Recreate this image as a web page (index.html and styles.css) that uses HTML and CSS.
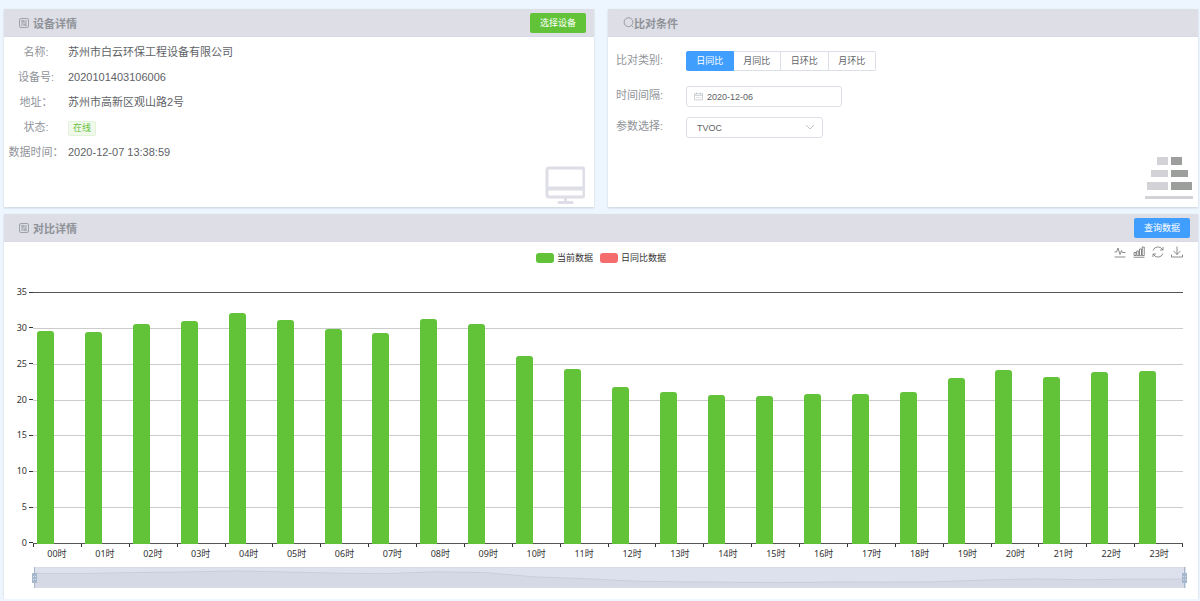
FILE: index.html
```
<!DOCTYPE html>
<html lang="zh-CN">
<head>
    <meta charset="UTF-8">
    <meta name="viewport" content="width=device-width, initial-scale=1.0">
    <title>对比详情</title>
    <link rel="stylesheet" href="styles.css">
</head>
<body>
<div class="top-row">
    <section class="card">
        <div class="card-header">
            <svg class="title-icon" viewBox="0 0 20 20" fill="none" stroke="currentColor" stroke-width="1.6">
                <rect x="1" y="1" width="18" height="18" rx="3"></rect>
                <path d="M4 6h2M9 6h7M4 14h7M14 14h2M4 10h12"></path>
                <circle cx="7.500" cy="6" r="1.500"></circle>
                <circle cx="12.500" cy="14" r="1.500"></circle>
            </svg>
            <h2>设备详情</h2>
            <button type="button" class="btn btn-success">选择设备</button>
        </div>
        <div class="card-body">
            <dl class="device-info">
                <dt>名称:</dt>
                <dd>苏州市白云环保工程设备有限公司</dd>
                <dt>设备号:</dt>
                <dd>2020101403106006</dd>
                <dt>地址：</dt>
                <dd>苏州市高新区观山路2号</dd>
                <dt>状态:</dt>
                <dd><span class="tag">在线</span></dd>
                <dt>数据时间：</dt>
                <dd>2020-12-07 13:38:59</dd>
            </dl>
            <svg class="monitor-icon" viewBox="0 0 40 38" fill="none" stroke="#dddee6" stroke-width="3">
                <rect x="2" y="2" width="37" height="29" rx="2"></rect>
                <path d="M3 22.500h35" stroke-width="4"></path>
                <path d="M20.500 31v5"></path>
                <path d="M14 36.500h13" stroke-linecap="round"></path>
            </svg>
        </div>
    </section>

    <section class="card">
        <div class="card-header">
            <svg class="title-icon search" viewBox="0 0 20 20" fill="none" stroke="currentColor" stroke-width="1.6">
                <circle cx="10" cy="9.5" r="8"></circle>
                <path d="M15.5 15.5l3 3"></path>
            </svg>
            <h2>比对条件</h2>
        </div>
        <div class="card-body">
            <form class="filters">
                <div class="filter-row category">
                    <span class="filter-label" id="categoryLabel">比对类别:</span>
                    <div class="radio-group" role="radiogroup" aria-labelledby="categoryLabel">
                        <label><input type="radio" name="category" checked><span>日同比</span></label>
                        <label><input type="radio" name="category"><span>月同比</span></label>
                        <label><input type="radio" name="category"><span>日环比</span></label>
                        <label><input type="radio" name="category"><span>月环比</span></label>
                    </div>
                </div>
                <div class="filter-row">
                    <label class="filter-label" for="dateInput">时间间隔:</label>
                    <div class="field date-field">
                        <svg class="calendar-icon" viewBox="0 0 16 16" fill="none" stroke="#c0c4cc" stroke-width="1.4">
                            <path d="M1 3h14v11H1zM1 6h14M4.500 1v3M11.500 1v3"></path>
                            <path d="M4 10h8" stroke-dasharray="2 1"></path>
                        </svg>
                        <input type="text" id="dateInput" value="2020-12-06">
                    </div>
                </div>
                <div class="filter-row">
                    <label class="filter-label" for="paramSelect">参数选择:</label>
                    <div class="field select-field">
                        <select id="paramSelect">
                            <option>TVOC</option>
                        </select>
                        <svg class="arrow-icon" viewBox="0 0 10 10" fill="none" stroke="#c0c4cc">
                            <path d="M1 3l4 4 4-4"></path>
                        </svg>
                    </div>
                </div>
            </form>
            <svg class="stack-icon" viewBox="0 0 48 44">
                <g fill="#d3d2d6">
                    <rect x="12" y="1" width="11" height="8"></rect>
                    <rect x="6" y="14" width="17" height="7"></rect>
                    <rect x="2" y="26" width="21" height="8"></rect>
                    <rect x="0" y="40" width="48" height="3"></rect>
                </g>
                <g fill="#9c9f9c">
                    <rect x="26" y="1" width="11" height="8"></rect>
                    <rect x="26" y="14" width="17" height="7"></rect>
                    <rect x="26" y="26" width="21" height="8"></rect>
                </g>
            </svg>
        </div>
    </section>
</div>

<section class="card">
    <div class="card-header">
        <svg class="title-icon" viewBox="0 0 20 20" fill="none" stroke="currentColor" stroke-width="1.6">
            <rect x="1" y="1" width="18" height="18" rx="3"></rect>
            <path d="M4 6h2M9 6h7M4 14h7M14 14h2M4 10h12"></path>
            <circle cx="7.500" cy="6" r="1.500"></circle>
            <circle cx="12.500" cy="14" r="1.500"></circle>
        </svg>
        <h2>对比详情</h2>
        <button type="button" class="btn btn-primary">查询数据</button>
    </div>
    <div class="chart">
        <div class="chart-top">
            <div class="legend">
                <span class="legend-item"><i class="swatch current"></i>当前数据</span>
                <span class="legend-item"><i class="swatch compare"></i>日同比数据</span>
            </div>
            <div class="toolbox">
                <svg viewBox="0 0 24 24"><path d="M1 12h4l3-8 4 13 3-8 2 4h6M1 22h22"></path></svg>
                <svg viewBox="0 0 24 24"><path d="M2 13h4v6H2zM7.500 10h4v9h-4zM13 6h4v13h-4zM18.500 2h4v17h-4zM1 22.500h22"></path></svg>
                <svg viewBox="0 0 24 24"><path d="M2 9a10.500 10.500 0 0 1 19-2M22 2v6h-6M22 15a10.500 10.500 0 0 1-19 2M2 22v-6h6"></path></svg>
                <svg viewBox="0 0 24 24"><path d="M12 1v16M5 10l7 7 7-7M1 17v5h22v-5"></path></svg>
            </div>
        </div>
        <div class="plot">
            <div class="y-axis">
                <span>35</span><span>30</span><span>25</span><span>20</span><span>15</span><span>10</span><span>5</span><span>0</span>
            </div>
            <div class="plot-area">
                <div class="grid-lines"><i></i><i></i><i></i><i></i><i></i><i></i><i></i><i></i></div>
                <div class="bars" id="bars"></div>
            </div>
            <div class="x-axis">
                <div class="x-ticks" id="xTicks"></div>
                <div class="x-labels" id="xLabels"></div>
            </div>
        </div>
        <div class="zoom-slider">
            <svg viewBox="0 0 23 21" preserveAspectRatio="none">
                <polygon id="zoomArea"></polygon>
                <polyline id="zoomLine"></polyline>
            </svg>
            <span class="handle left"></span>
            <span class="handle right"></span>
        </div>
    </div>
</section>

<script src="chart.js"></script>
</body>
</html>
```
FILE: styles.css
```
:root {
    --page-color: #edf5fe;
    --header-color: #dddee6;
    --primary-color: #409eff;
    --success-color: #62c339;
    --label-color: #909399;
    --text-color: #606266;
    --border-color: #dcdfe6;
}

* {
    box-sizing: border-box;
}

body {
    margin: 0;
    padding: 9px 2px 0 4px;
    background-color: var(--page-color);
    color: var(--text-color);
    font-family: "Liberation Sans", "Noto Sans CJK SC", sans-serif;
    font-size: 11px;
}

button, input, select {
    font-family: inherit;
    font-size: 9px;
}

.top-row {
    display: grid;
    grid-template-columns: 1fr 1fr;
    gap: 14px;
    margin-bottom: 7px;
}

.card {
    background-color: white;
    box-shadow: 0 1px 2px rgba(0, 0, 0, 0.15);
}

.card-header {
    display: flex;
    align-items: center;
    height: 28px;
    padding: 0 8px 0 15px;
    background-color: var(--header-color);
    border-bottom: 1px solid #d8dbe6;
    color: var(--label-color);
}

.card-header h2 {
    margin: 0;
    font-size: 11px;
    font-weight: bold;
}

.title-icon {
    width: 10px;
    height: 10px;
    margin-right: 4px;
}

.title-icon.search {
    width: 11px;
    height: 11px;
    margin-right: 0;
}

.btn {
    height: 20px;
    margin-left: auto;
    padding: 0 10px;
    border: none;
    border-radius: 2px;
    color: white;
    cursor: pointer;
}

.btn-success {
    background-color: var(--success-color);
}

.btn-primary {
    background-color: var(--primary-color);
}

.card-body {
    display: flex;
    justify-content: space-between;
    min-height: 170px;
}

/* device info */
.device-info {
    display: grid;
    grid-template-columns: 64px auto;
    grid-auto-rows: 25px;
    align-content: start;
    margin: 3px 0 0;
    line-height: 25px;
}

.device-info dt {
    text-align: center;
    color: var(--label-color);
    white-space: nowrap;
}

.device-info dd {
    margin: 0;
}

.tag {
    display: inline-block;
    padding: 0 4px;
    border: 1px solid #e1f3d8;
    border-radius: 2px;
    background-color: #f0f9eb;
    color: #67c23a;
    font-size: 9px;
    line-height: 13px;
}

.monitor-icon {
    width: 40px;
    height: 38px;
    align-self: flex-end;
    margin: 0 9px 3px;
}

.stack-icon {
    width: 48px;
    height: 44px;
    align-self: flex-end;
    margin: 0 5px 7px;
}

/* filters */
.filters {
    padding: 14px 0 0 8px;
}

.filter-row {
    display: flex;
    align-items: flex-start;
    margin-bottom: 10px;
}

.filter-row.category {
    margin-bottom: 15px;
}

.filter-label {
    width: 70px;
    color: var(--label-color);
    line-height: 18px;
}

.radio-group {
    display: flex;
    width: 190px;
}

.radio-group label {
    flex: 1;
}

.radio-group input {
    position: absolute;
    opacity: 0;
}

.radio-group span {
    display: block;
    border: 1px solid var(--border-color);
    border-left-width: 0;
    font-size: 9px;
    line-height: 18px;
    text-align: center;
    cursor: pointer;
}

.radio-group label:first-child span {
    border-left-width: 1px;
    border-radius: 2px 0 0 2px;
}

.radio-group label:last-child span {
    border-radius: 0 2px 2px 0;
}

.radio-group input:checked + span {
    background-color: var(--primary-color);
    border-color: var(--primary-color);
    color: white;
}

.field {
    position: relative;
    height: 21px;
}

.field input, .field select {
    width: 100%;
    height: 100%;
    border: 1px solid var(--border-color);
    border-radius: 3px;
    background-color: white;
    color: var(--text-color);
}

.field input {
    padding: 0 8px 0 20px;
}

.field select {
    appearance: none;
    padding: 0 10px;
}

.date-field {
    width: 156px;
}

.select-field {
    width: 137px;
}

.calendar-icon {
    position: absolute;
    top: 6px;
    left: 8px;
    width: 9px;
    height: 9px;
}

.arrow-icon {
    position: absolute;
    top: 5px;
    right: 8px;
    width: 10px;
    height: 10px;
    pointer-events: none;
}

/* chart */
.chart {
    padding-bottom: 11px;
    color: #333;
    font-family: "Noto Sans", "Noto Sans CJK SC", sans-serif;
    font-size: 9px;
}

.chart-top {
    display: grid;
    grid-template-columns: 1fr auto 1fr;
    height: 50px;
    padding: 4px 15px 0;
}

.legend {
    display: flex;
    grid-column: 2;
    gap: 7px;
    margin-top: 6px;
    line-height: 12px;
}

.legend-item {
    display: flex;
    align-items: flex-start;
    gap: 3px;
    height: 12px;
}

.swatch {
    width: 18px;
    height: 10px;
    margin-top: 1px;
    border-radius: 3px;
}

.swatch.current {
    background-color: var(--success-color);
}

.swatch.compare {
    background-color: #f56c6c;
}

.toolbox {
    display: flex;
    justify-self: end;
    gap: 7px;
}

.toolbox svg {
    width: 12px;
    height: 12px;
    fill: none;
    stroke: #666;
    stroke-width: 1.5;
}

.plot {
    display: grid;
    grid-template-columns: 29px 1fr;
    margin-right: 15px;
}

.y-axis {
    display: flex;
    flex-direction: column;
    justify-content: space-between;
    margin: -6px 0 -5px;
}

.y-axis span {
    display: flex;
    align-items: center;
    justify-content: flex-end;
    gap: 2px;
    line-height: 12px;
}

.y-axis span::after {
    content: "";
    width: 4px;
    height: 1px;
    background-color: #333;
}

.plot-area {
    display: grid;
    height: 252px;
}

.grid-lines, .bars {
    grid-area: 1 / 1;
    display: flex;
}

.grid-lines {
    flex-direction: column;
    justify-content: space-between;
}

.grid-lines i {
    height: 1px;
    background-color: #ccc;
}

.grid-lines i:first-child, .grid-lines i:last-child {
    background-color: #555;
}

.bars {
    align-items: flex-end;
}

.bar-slot {
    display: flex;
    flex: 1;
    align-items: flex-end;
    height: 100%;
    padding-left: 4px;
}

.bar {
    width: 17px;
    border-radius: 3px 3px 0 0;
    background-color: var(--success-color);
}

.x-axis {
    grid-column: 2;
}

.x-ticks {
    display: flex;
    justify-content: space-between;
    height: 3px;
}

.x-ticks i {
    width: 1px;
    background-color: #333;
}

.x-labels {
    display: flex;
    line-height: 13px;
}

.x-labels span {
    flex: 1;
    text-align: center;
}

.zoom-slider {
    position: relative;
    height: 21px;
    margin: 7px 12px 0 30px;
    border: 1px solid #d8dce6;
    background-color: #dde1ed;
}

.zoom-slider svg {
    display: block;
    width: 100%;
    height: 100%;
}

.zoom-slider polygon {
    fill: #d5d9e5;
}

.zoom-slider polyline {
    fill: none;
    stroke: #c6cfdd;
    vector-effect: non-scaling-stroke;
}

.handle {
    position: absolute;
    top: 5px;
    width: 5px;
    height: 10px;
    background: repeating-linear-gradient(#a7b7cc 0 2px, #d5dfeb 2px 3px);
    border: 1px solid #a7b7cc;
}

.handle::before {
    content: "";
    position: absolute;
    top: -7px;
    left: 1px;
    width: 1px;
    height: 21px;
    background-color: #a7b7cc;
}

.handle.left {
    left: -3px;
}

.handle.right {
    right: -2px;
}
```
FILE: chart.js
```
const values = [29.6, 29.5, 30.5, 31, 32.1, 31.1, 29.9, 29.3, 31.2, 30.5, 26.1, 24.3,
    21.8, 21.1, 20.7, 20.5, 20.9, 20.8, 21.1, 23, 24.1, 23.2, 23.9, 24];
const maxValue = 35;

const bars = document.getElementById('bars');
const xLabels = document.getElementById('xLabels');
const xTicks = document.getElementById('xTicks');

values.forEach((value, hour) => {
    const slot = document.createElement('div');
    slot.className = 'bar-slot';
    const bar = document.createElement('div');
    bar.className = 'bar';
    bar.style.height = (value / maxValue * 100) + '%';
    slot.appendChild(bar);
    bars.appendChild(slot);

    const label = document.createElement('span');
    label.textContent = String(hour).padStart(2, '0') + '时';
    xLabels.appendChild(label);
});

// one more tick than there are hours
for (let i = 0; i <= values.length; i++) {
    xTicks.appendChild(document.createElement('i'));
}

// Small overview line inside the zoom slider
const points = values.map((value, i) => i + ',' + (16 - (value - 20.5) * 1.1)).join(' ');
document.getElementById('zoomLine').setAttribute('points', points);
document.getElementById('zoomArea').setAttribute('points', '0,21 ' + points + ' 23,21');
```
